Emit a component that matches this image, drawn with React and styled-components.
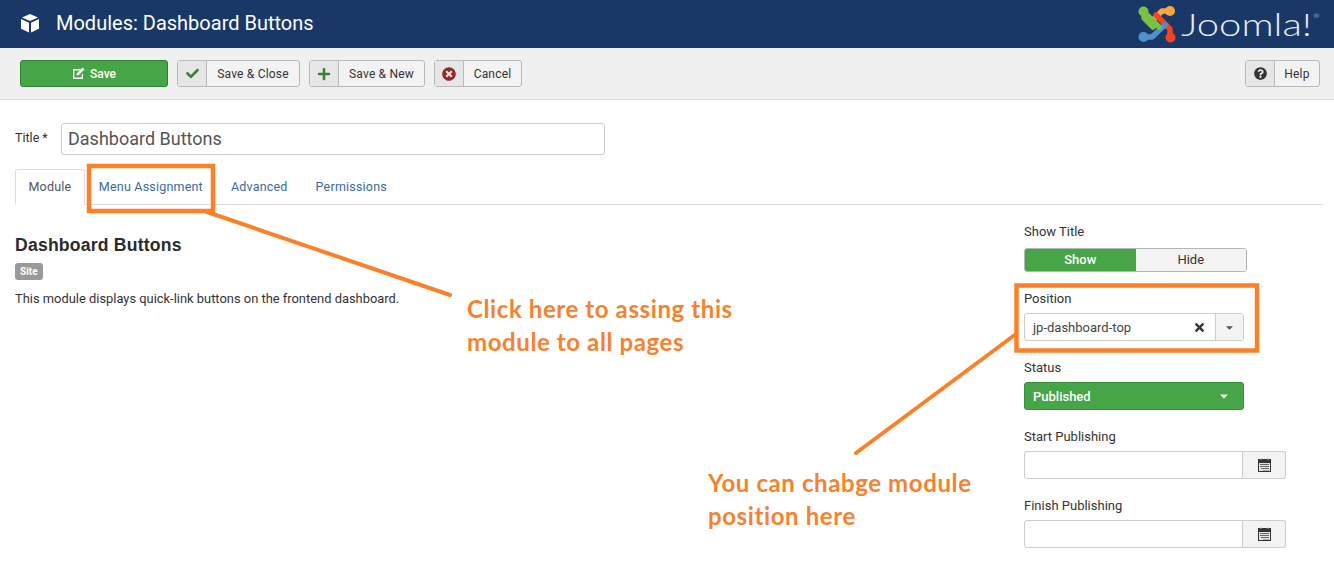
import React from "react";
import styled, { createGlobalStyle } from "styled-components";
import { FaCheck, FaPlus, FaTimes, FaTimesCircle, FaQuestionCircle, FaCaretDown } from "react-icons/fa";

const Global = createGlobalStyle`
  html, body { margin: 0; padding: 0; background: #fff; }
  body { font-family: "Roboto", "Liberation Sans", sans-serif; font-size: 13px; color: #333; }
  * { box-sizing: border-box; }
`;
const Page = styled.div`position: relative; width: 1334px; height: 562px; overflow: hidden;`;
const Header = styled.header`
  height: 48px; background: #1a3867; display: flex; align-items: center; padding: 0 0 3px 20px; color: #fff;
`;
const HeaderIcon = styled.span`display: flex; margin-right: 16px;`;
const PageTitle = styled.h1`margin: 0; font-size: 20px; font-weight: 400; flex: 1; color: #fff;`;
const Logo = styled.div`display: flex; align-items: center; width: 196px; margin-top: 3px;`;
const LogoText = styled.span`
  display: inline-block; width: 150px; margin-left: 5px; font-family: "Lato", sans-serif; font-weight: 300; font-size: 32px; color: #e8edf3; line-height: 1;
  transform: scaleX(1.25); transform-origin: left center;
`;
const LogoMarkR = styled.sup`font-size: 6px; vertical-align: 18px; margin-left: 1px;`;
const Toolbar = styled.div`
  height: 52px; background: #f0f0f0; border-bottom: 1px solid #dcdcdc; display: flex; align-items: flex-start; padding: 12px 14px 0 20px; gap: 9px;
`;
const PrimaryButton = styled.button`
  width: 148px; height: 27px; background: #46a546; border: 1px solid #2f7d32; border-radius: 3px; color: #fff; font: 500 12px "Roboto", sans-serif;
  display: flex; align-items: center; justify-content: center; gap: 5px; padding: 0;
`;
const ToolButton = styled.button`
  height: 27px; width: ${p => p.$w}px; background: #f3f3f3; border: 1px solid #b9b9b9; border-radius: 3px; color: #333;
  font: 400 12px "Roboto", sans-serif; letter-spacing: .2px; display: flex; align-items: stretch; padding: 0; margin-left: ${p => p.$push ? "auto" : "0"};
`;
const ToolIcon = styled.span`
  width: 29px; flex: none; background: #e6e6e6; border-right: 1px solid #b9b9b9; display: flex; align-items: center; justify-content: center;
  color: ${p => p.$c}; font-size: ${p => p.$s || 13}px;
`;
const ToolLabel = styled.span`flex: 1; display: flex; align-items: center; justify-content: center;`;
const Main = styled.main`padding: 23px 10px 0 15px;`;
const TitleRow = styled.div`display: flex; align-items: center; height: 32px;`;
const TitleLabel = styled.label`width: 46px; font-size: 12.500px; margin-top: -4px;`;
const TitleInput = styled.div`
  width: 544px; height: 32px; border: 1px solid #ccc; border-radius: 3px; padding: 0 6px 2px; display: flex; align-items: center; font-size: 18px; color: #555;
`;
const Tabs = styled.nav`
  display: flex; height: 36px; margin-top: 14px; border-bottom: 1px solid #ddd;
`;
const Tab = styled.a`
  height: 36px; padding: 0 ${p => p.$active ? 12.5 : 14}px 2px; display: flex; align-items: center; font-size: 12.500px; letter-spacing: .2px;
  color: ${p => p.$active ? "#555" : "#3a6a9c"};
  ${p => p.$active && "background:#fff;border:1px solid #ddd;border-bottom-color:#fff;border-radius:3px 3px 0 0;"}
`;
const Columns = styled.div`display: flex; justify-content: space-between;`;
const Description = styled.section`padding-top: 30px;`;
const ModuleHeading = styled.h2`margin: 0; font: 700 17.600px/20px "Liberation Sans", sans-serif; letter-spacing: .2px; color: #2b2b2b;`;
const Badge = styled.span`
  display: inline-block; margin-top: 8px; background: #999; color: #fff; border-radius: 3px; font-size: 10px; font-weight: 700; height: 17px; line-height: 17px; padding: 0 5px;
`;
const Text = styled.p`margin: 10px 0 0; font-size: 12.900px; line-height: 18px;`;
const Side = styled.aside`width: 300px; padding-top: 19px;`;
const Label = styled.div`font-size: 13px; line-height: 16px; margin-bottom: ${p => p.$mb ?? 6}px; margin-top: ${p => p.$mt ?? 19}px;`;
const Toggle = styled.div`display: flex; width: 223px; height: 24px; border: 1px solid #b5b5b5; border-radius: 3px; overflow: hidden;`;
const ToggleOption = styled.span`
  flex: 1; display: flex; align-items: center; justify-content: center; font-size: 13px; padding-bottom: 2px; font-weight: ${p => p.$on ? 500 : 400};
  background: ${p => p.$on ? "#46a546" : "#f3f3f3"}; color: ${p => p.$on ? "#fff" : "#333"};
`;
const SelectBox = styled.div`
  width: 220px; height: 28px; border: 1px solid #ccc; border-radius: 3px; display: flex; align-items: stretch; font-size: 13px; color: #444;
`;
const SelectValue = styled.span`flex: 1; display: flex; align-items: center; justify-content: space-between; padding: 0 9px 0 8px;`;
const SelectArrow = styled.span`width: 28px; background: #f3f3f3; border-left: 1px solid #ccc; display: flex; align-items: center; justify-content: center; color: #555; font-size: 11px;`;
const StatusSelect = styled.div`
  width: 220px; height: 28px; background: #46a546; border: 1px solid #3a8f3a; border-radius: 3px; color: #fff; font-weight: 500; font-size: 13px;
  display: flex; align-items: center; justify-content: space-between; padding: 0 13px 0 8px;
`;
const DateField = styled.div`width: 262px; height: 28px; display: flex;`;
const DateInput = styled.div`flex: 1; border: 1px solid #ccc; border-radius: 3px 0 0 3px;`;
const DateButton = styled.div`
  width: 43px; background: #f3f3f3; border: 1px solid #ccc; border-left: 0; border-radius: 0 3px 3px 0; display: flex; align-items: center; justify-content: center;
`;
const Overlay = styled.svg`position: absolute; left: 0; top: 0; pointer-events: none;`;
const Note = styled.div`
  position: absolute; left: ${p => p.$x}px; top: ${p => p.$y}px; width: 320px; font: 700 24px/33px "Lato", sans-serif; letter-spacing: .6px; color: #f5822f;
`;

const CubeIcon = () => (
  <svg width="20" height="20" viewBox="0 0 20 20" fill="#fff">
    <path d="M10 1l8 3.500L10 8 2 4.500z" />
    <path d="M1 6l8 3.700V19.500l-8-3.800z" />
    <path d="M19 6l-8 3.700V19.500l8-3.800z" />
  </svg>
);
const EditIcon = () => (
  <svg width="13" height="13" viewBox="0 0 13 13"><path fill="#fff" d="M1 2h8L7.600 3.400H2.400v7.200h7.200V7.800L11 6.400V12H1z"/><path fill="#fff" d="M10.600.6l1.800 1.800-5.600 5.600-2.300.5.5-2.300z"/></svg>
);
const CalendarIcon = () => (
  <svg width="13" height="14" viewBox="0 0 13 14"><path fill="#333" d="M0 1h13v13H0z"/><path fill="#e4e4e4" d="M1 5h11v8H1z"/><path fill="#666" d="M2 6h9v1H2zM2 8h9v1H2zM3 10h8v1H3zM5 12h6v.6H5z"/><path fill="#bbb" d="M2.500 0h1v2h-1zM9.500 0h1v2h-1z"/></svg>
);
const JoomlaMark = () => (
  <svg width="38" height="38" viewBox="0 0 38 38" fill="none" strokeWidth="5.500" strokeLinecap="round" strokeLinejoin="round">
    <path stroke="#f9a541" d="M32 6h-8L12 18" />
    <circle cx="32" cy="6" r="5" fill="#f9a541" />
    <path stroke="#f44321" d="M32 32v-8L18 10" />
    <circle cx="32.500" cy="32.500" r="5" fill="#f44321" />
    <path stroke="#5091cd" d="M6 32h8l13-12" />
    <circle cx="5.500" cy="32" r="5" fill="#5091cd" />
    <path stroke="#7ac143" d="M6 7l15 15" />
    <circle cx="5.500" cy="6.500" r="5" fill="#7ac143" />
    <path stroke="#7ac143" d="M6 7v6l9 9" />
  </svg>
);

export default function App() {
  return (
    <Page>
      <Global />
      <Header>
        <HeaderIcon><CubeIcon /></HeaderIcon>
        <PageTitle>Modules: Dashboard Buttons</PageTitle>
        <Logo><JoomlaMark /><LogoText>Joomla!<LogoMarkR>®</LogoMarkR></LogoText></Logo>
      </Header>
      <Toolbar>
        <PrimaryButton><EditIcon />Save</PrimaryButton>
        <ToolButton $w={123}><ToolIcon $c="#3d803d"><FaCheck /></ToolIcon><ToolLabel>Save &amp; Close</ToolLabel></ToolButton>
        <ToolButton $w={116}><ToolIcon $c="#3d803d" $s={14}><FaPlus /></ToolIcon><ToolLabel>Save &amp; New</ToolLabel></ToolButton>
        <ToolButton $w={88}><ToolIcon $c="#942a25" $s={14}><FaTimesCircle /></ToolIcon><ToolLabel>Cancel</ToolLabel></ToolButton>
        <ToolButton $w={75} $push><ToolIcon $c="#333" $s={13}><FaQuestionCircle /></ToolIcon><ToolLabel>Help</ToolLabel></ToolButton>
      </Toolbar>
      <Main>
        <TitleRow>
          <TitleLabel>Title *</TitleLabel>
          <TitleInput>Dashboard Buttons</TitleInput>
        </TitleRow>
        <Tabs>
          <Tab $active>Module</Tab>
          <Tab>Menu Assignment</Tab>
          <Tab>Advanced</Tab>
          <Tab>Permissions</Tab>
        </Tabs>
        <Columns>
          <Description>
            <ModuleHeading>Dashboard Buttons</ModuleHeading>
            <Badge>Site</Badge>
            <Text>This module displays quick-link buttons on the frontend dashboard.</Text>
          </Description>
          <Side>
            <Label $mt={0} $mb={8}>Show Title</Label>
            <Toggle><ToggleOption $on>Show</ToggleOption><ToggleOption>Hide</ToggleOption></Toggle>
            <Label>Position</Label>
            <SelectBox>
              <SelectValue>jp-dashboard-top<FaTimes size={13} color="#333" /></SelectValue>
              <SelectArrow><FaCaretDown /></SelectArrow>
            </SelectBox>
            <Label>Status</Label>
            <StatusSelect>Published<FaCaretDown size={12} /></StatusSelect>
            <Label>Start Publishing</Label>
            <DateField><DateInput /><DateButton><CalendarIcon /></DateButton></DateField>
            <Label>Finish Publishing</Label>
            <DateField><DateInput /><DateButton><CalendarIcon /></DateButton></DateField>
          </Side>
        </Columns>
      </Main>
      <Overlay width="1334" height="562" fill="none" stroke="#fa8128">
        <rect x="89" y="166" width="124" height="45" strokeWidth="4.500" />
        <rect x="1016.500" y="285.500" width="240.500" height="65" strokeWidth="4.500" />
        <path d="M207 212L450 295" strokeWidth="4" strokeLinecap="round" />
        <path d="M1016 334L856 453" strokeWidth="4" strokeLinecap="round" />
      </Overlay>
      <Note $x={467} $y={292}>Click here to assing this<br />module to all pages</Note>
      <Note $x={708} $y={466}>You can chabge module<br />position here</Note>
    </Page>
  );
}
